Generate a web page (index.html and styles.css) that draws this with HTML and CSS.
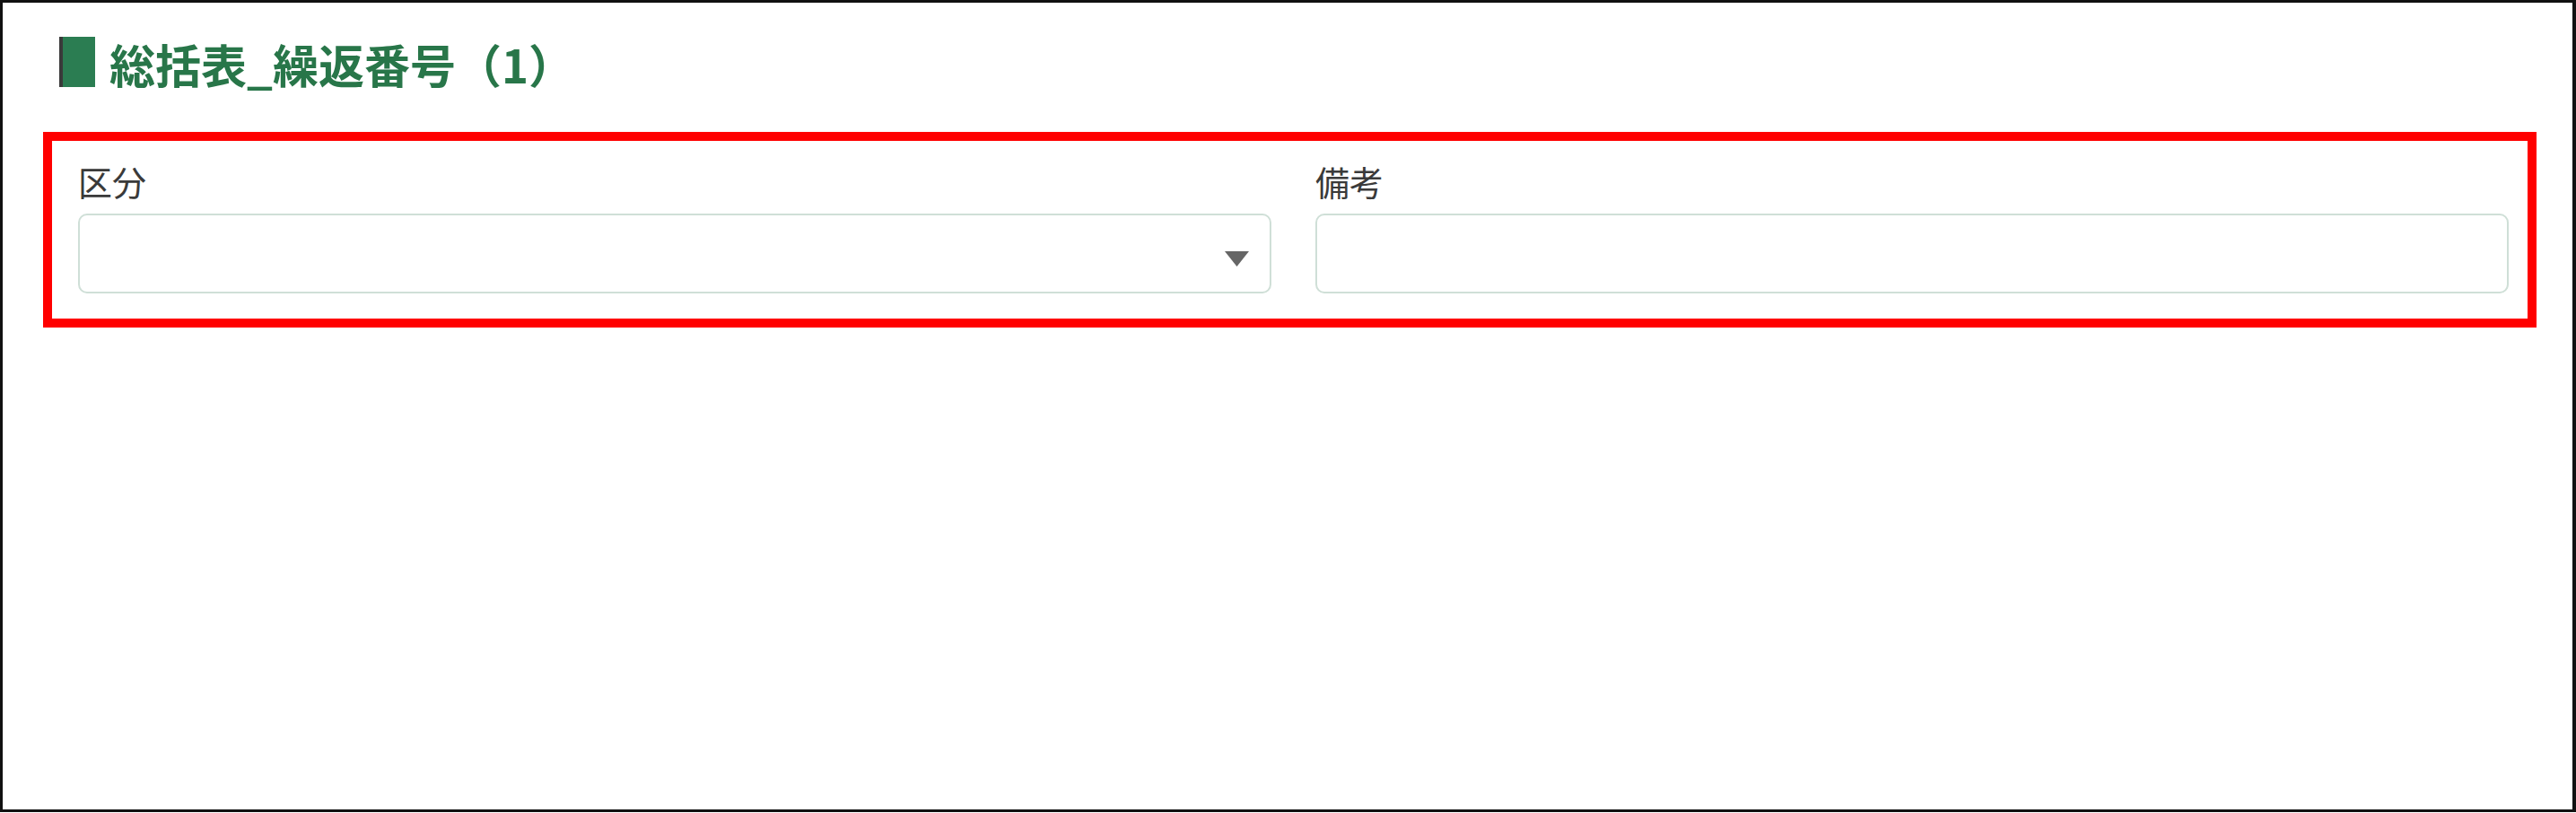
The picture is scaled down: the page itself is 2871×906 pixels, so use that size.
FILE: index.html
```html
<!DOCTYPE html>
<html lang="ja">
<head>
<meta charset="utf-8">
<title>総括表_繰返番号（1）</title>
<link rel="stylesheet" href="styles.css">
</head>
<body>
<div class="frame">
  <h2 class="section-title"><span class="title-mark"></span><span class="title-text">総括表_繰返番号（1）</span></h2>
  <div class="highlight">
    <div class="field">
      <label class="field-label">区分</label>
      <div class="select-box">
        <svg class="select-arrow" width="27" height="17" viewBox="0 0 27 17"><polygon points="0,0 27,0 13.5,17" fill="#666"/></svg>
      </div>
    </div>
    <div class="field">
      <label class="field-label">備考</label>
      <div class="text-box"></div>
    </div>
  </div>
</div>
</body>
</html>
```
FILE: styles.css
```css
html, body {
  margin: 0;
  padding: 0;
  background: #ffffff;
}
body {
  width: 2871px;
  height: 906px;
  overflow: hidden;
  font-family: "Noto Sans CJK JP", "Noto Sans", sans-serif;
}
.frame {
  box-sizing: border-box;
  width: 2871px;
  height: 905px;
  border-style: solid;
  border-color: #111111;
  border-width: 3px 4px 3px 3px;
  padding: 38px 40px 0 45px;
  background: #ffffff;
}
.section-title {
  margin: 0;
  display: flex;
  align-items: center;
  gap: 16px;
  height: 56px;
  padding-left: 18px;
  font-size: 51px;
  font-weight: 700;
  color: #287649;
  line-height: 1;
}
.title-mark {
  box-sizing: border-box;
  width: 40px;
  height: 56px;
  background: #2b7d52;
  border-left: 4px solid #3a3a3a;
  flex: none;
}
.title-text {
  position: relative;
  top: 2px;
}
.highlight {
  box-sizing: border-box;
  margin-top: 50px;
  width: 2779px;
  height: 218px;
  border: 10px solid #ff0000;
  padding: 22px 21px 0 29px;
  display: grid;
  grid-template-columns: 1330px 1330px;
  column-gap: 49px;
}
.field {
  display: flex;
  flex-direction: column;
  gap: 13px;
}
.field-label {
  font-size: 38px;
  line-height: 46px;
  color: #3a3a3a;
}
.select-box, .text-box {
  box-sizing: border-box;
  height: 89px;
  border: 2px solid #cfdfd7;
  border-radius: 10px;
  background: #ffffff;
}
.select-box {
  display: flex;
  align-items: center;
  justify-content: flex-end;
  padding: 12px 23px 0 0;
}
.select-arrow {
  display: block;
}
```
